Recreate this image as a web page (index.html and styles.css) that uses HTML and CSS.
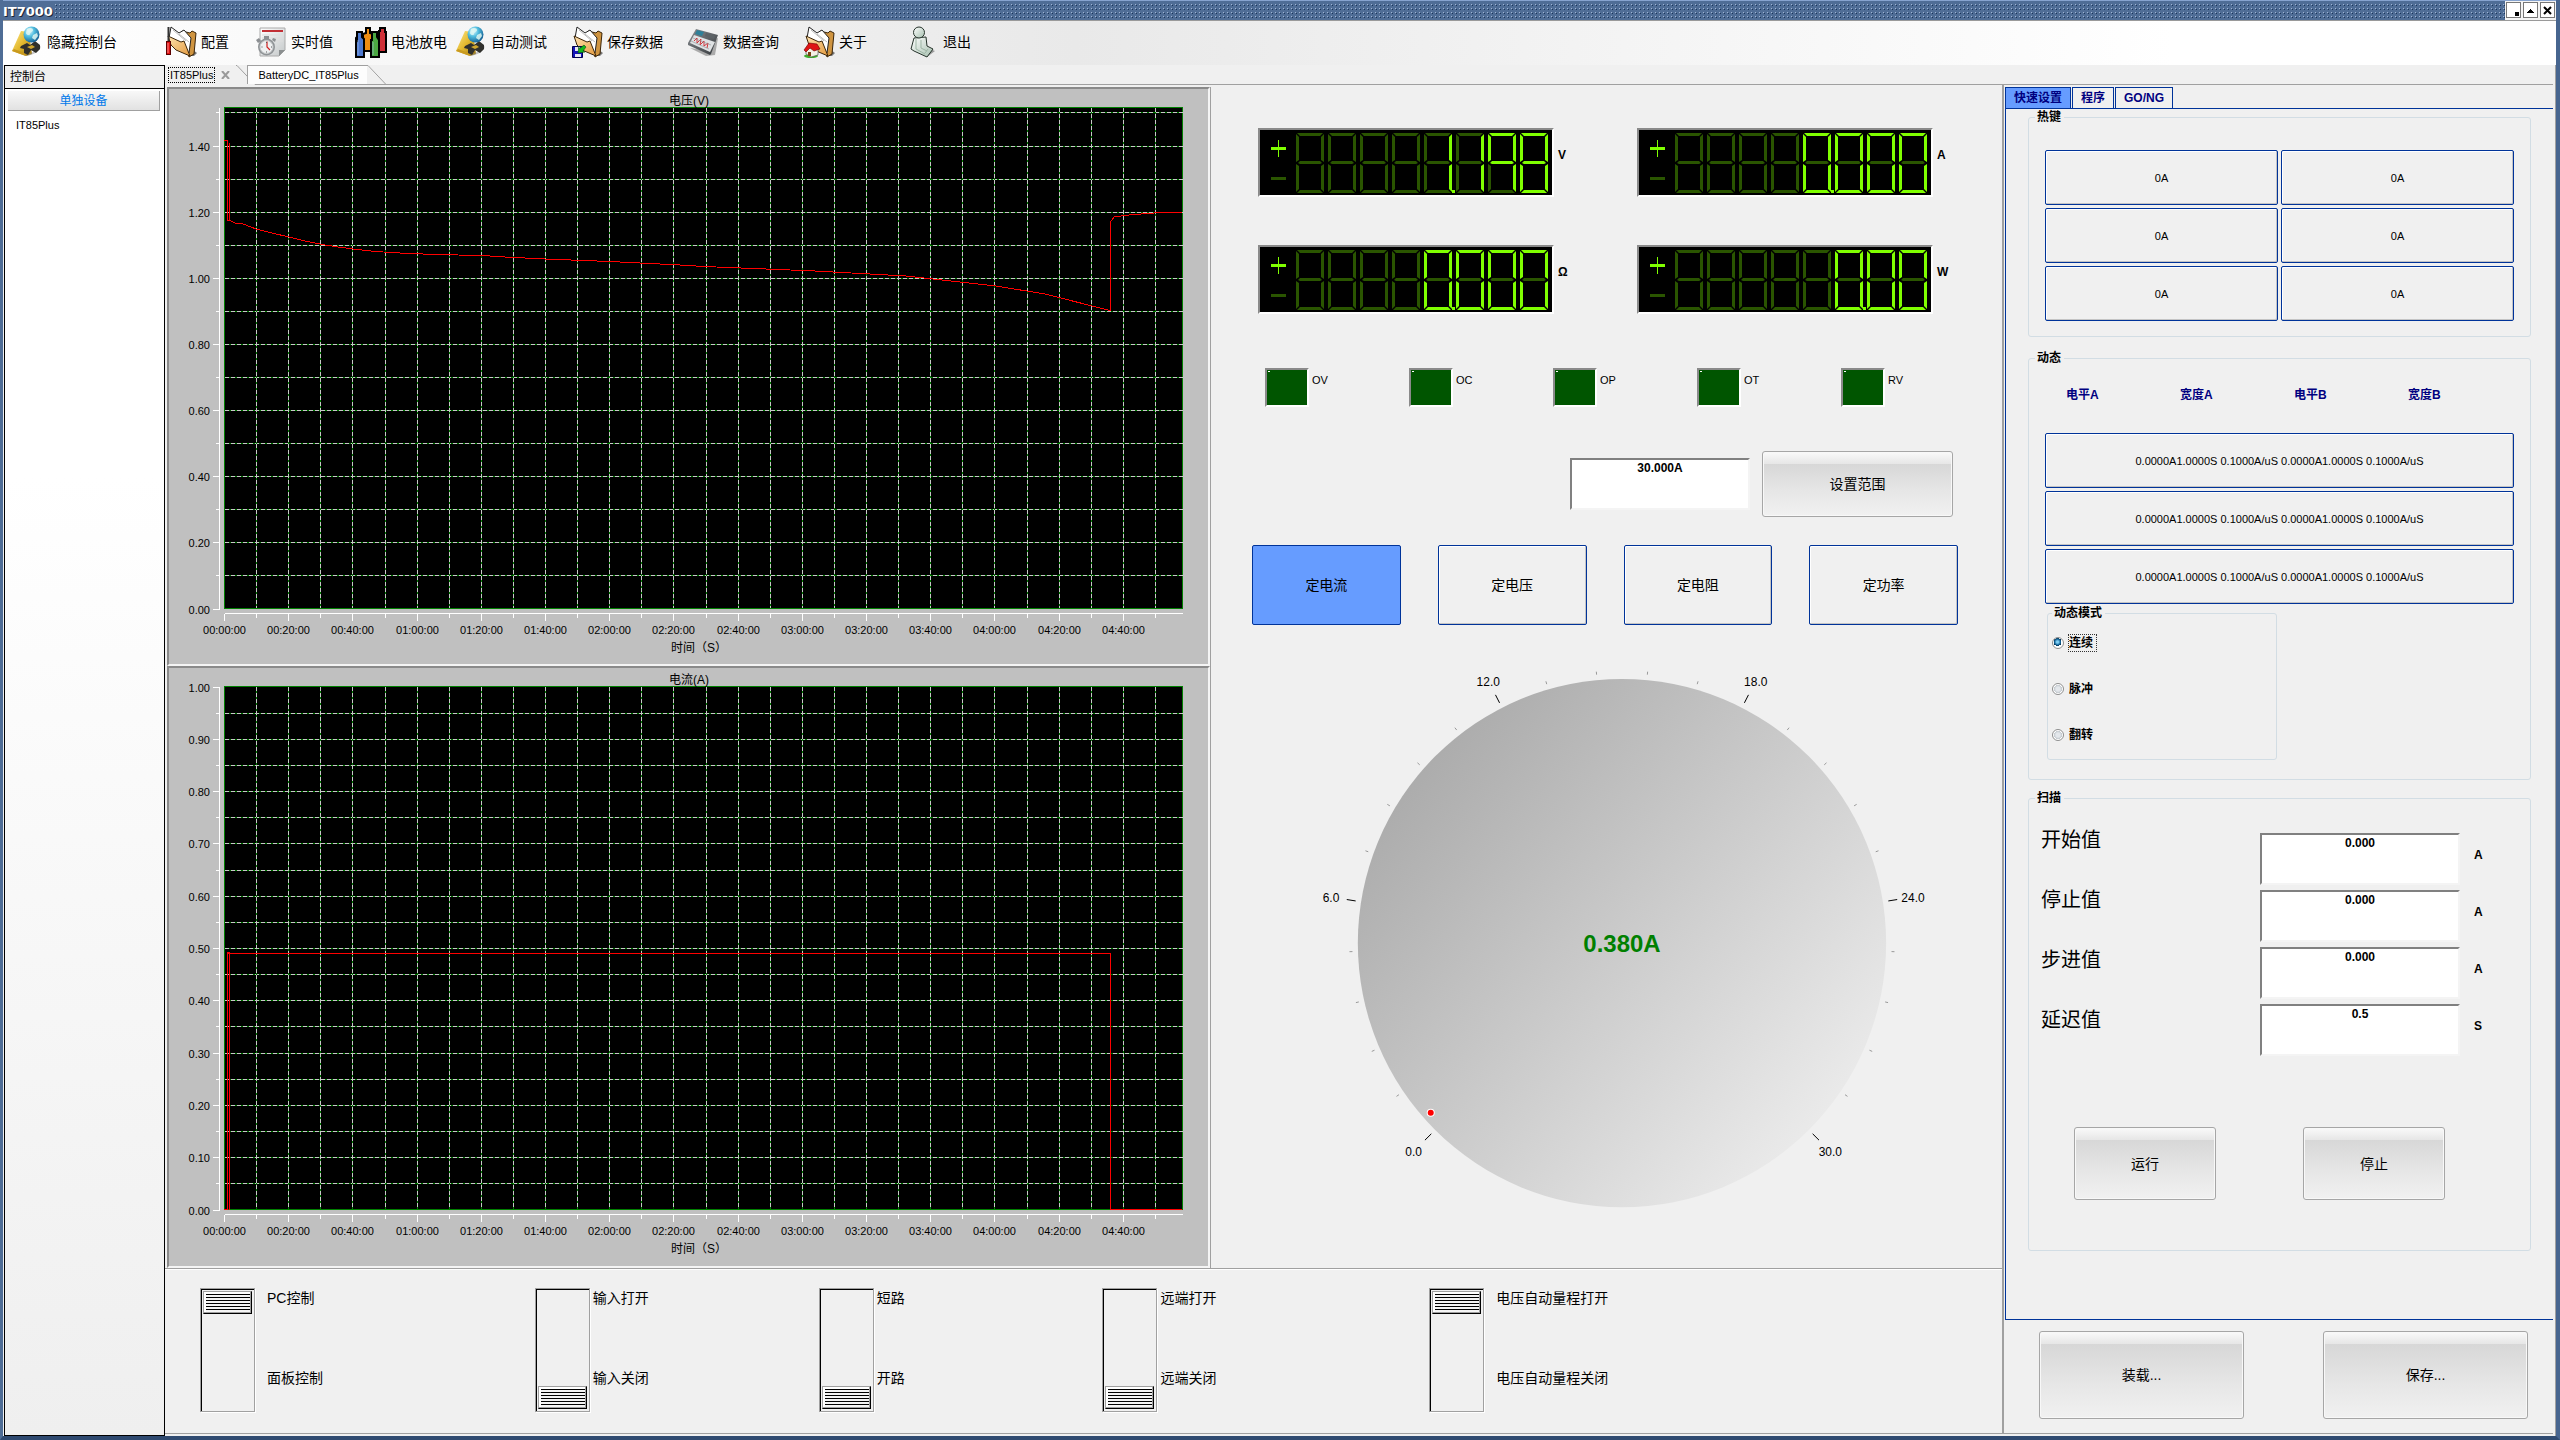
FILE: index.html
```html
<!DOCTYPE html>
<html lang="zh-CN">
<head>
<meta charset="utf-8">
<title>IT7000</title>
<link rel="stylesheet" href="styles.css">
</head>
<body>
<svg class="defs" aria-hidden="true">
  <defs>
    <linearGradient id="g-yellow" x1="0" y1="0" x2="1" y2="1"><stop offset="0" stop-color="#ffe98a"/><stop offset=".5" stop-color="#e3b92f"/><stop offset="1" stop-color="#9a7410"/></linearGradient>
    <radialGradient id="g-globe" cx=".35" cy=".3" r=".8"><stop offset="0" stop-color="#e8fbff"/><stop offset=".4" stop-color="#53bfe0"/><stop offset="1" stop-color="#0a4f86"/></radialGradient>
    <linearGradient id="g-folder" x1="0" y1="0" x2="1" y2="1"><stop offset="0" stop-color="#ffe3ae"/><stop offset="1" stop-color="#e39a3f"/></linearGradient>
    <linearGradient id="g-steel" x1="0" y1="0" x2="1" y2="1"><stop offset="0" stop-color="#8b8f93"/><stop offset="1" stop-color="#33373b"/></linearGradient>
    <linearGradient id="g-paper" x1="0" y1="0" x2="1" y2="1"><stop offset="0" stop-color="#ffffff"/><stop offset="1" stop-color="#c4c8c9"/></linearGradient>
    <linearGradient id="g-jade" x1="0" y1="0" x2="1" y2="1"><stop offset="0" stop-color="#ffffff"/><stop offset="1" stop-color="#a5bfae"/></linearGradient>
    <linearGradient id="g-dial" x1="0" y1="0.08" x2="0.95" y2="0.9"><stop offset="0" stop-color="#a3a3a3"/><stop offset="1" stop-color="#f0f0f0"/></linearGradient>
    <symbol id="i-console" viewBox="0 0 32 32">
      <path d="M1 25 10 5l8 1 3 22-6 2z" fill="url(#g-yellow)"/>
      <path d="M1 25 15 30l-1-3L3 23z" fill="#c99a1f"/>
      <path d="M14 30c5 0 12-3 15-7l1-3-8 6z" fill="#8c8c8c" opacity=".5"/>
      <path d="M10 20l6-3 3 2 5-4 5 4v4l-4 4-5-3-3 5-4-2v-4l-4-1z" fill="#30302c"/>
      <path d="M16 21l5-2 3 2-4 2z" fill="#cfa62d"/>
      <circle cx="20.500" cy="8.500" r="8" fill="url(#g-globe)"/>
      <path d="M16 3c3-2 6-1 6 1s-3 2-3 4-4 1-4-1zM22 9l4-2 1 3-3 4-3-2z" fill="#dff7f2" opacity=".85"/>
    </symbol>
    <symbol id="i-folder" viewBox="0 0 32 32">
      <path d="M24 30h5l3-3-4-3z" fill="#777"/>
      <path d="M17 5l8 2 2-2 4 2-2 21-5 3z" fill="#cf9440" stroke="#3b2509"/>
      <path d="M6 1l8 6 5-3 7 8-2 15-12-6-8-9z" fill="#fff" stroke="#222"/>
      <path d="M8 4l13 11M14 8l10 8" stroke="#bbb" fill="none"/>
      <path d="M3 10l13 6 3-1 6 15-14-6-5-5z" fill="url(#g-folder)" stroke="#3b2509"/>
    </symbol>
    <symbol id="i-config" viewBox="0 0 32 32">
      <use href="#i-folder"/>
      <path d="M3.500 1v14" stroke="#333" stroke-width="2"/>
      <rect x="1.500" y="15.500" width="4" height="13" fill="#e01010" stroke="#5a0000"/>
      <path d="M3 17v10" stroke="#ff8a8a"/>
    </symbol>
    <symbol id="i-save" viewBox="0 0 32 32">
      <use href="#i-folder"/>
      <path d="M1.500 20.500h10v11h-10z" fill="#1414b8" stroke="#00004a"/>
      <path d="M4 21h5v4H4zM4 28h6v3H4z" fill="#e6e6f2"/>
      <path d="M13 19l-5 4v-3l-1 7 7-1-2-1 3-4z" fill="#12b81c" stroke="#064d0a" stroke-width=".6"/>
    </symbol>
    <symbol id="i-about" viewBox="0 0 32 32">
      <use href="#i-folder"/>
      <ellipse cx="8" cy="30" rx="7" ry="2" fill="#3fae2c"/>
      <path d="M3 24l4-4 8 2v7l-7 2-5-3z" fill="#f3efe4" stroke="#444" stroke-width=".6"/>
      <path d="M1 24l5-7 8 1 3 5-6 2-4-3-4 4z" fill="#df1414" stroke="#6a0000" stroke-width=".6"/>
      <rect x="5" y="26" width="3" height="4" fill="#7a4312"/>
    </symbol>
    <symbol id="i-clock" viewBox="0 0 32 32">
      <path d="M5 2h25v22l-6 6H5z" fill="url(#g-paper)" stroke="#aaa"/>
      <path d="M7 4h21v2H7z" fill="#c22f35"/>
      <path d="M7 9h21M7 12h21M7 15h21" stroke="#ddd"/>
      <path d="M24 30v-6h6z" fill="#8b8f90"/>
      <path d="M9 10h5v3H9zM1 14l3-2 2 3-3 2zM18 12l3 1-1 3-3-2z" fill="#8c8f92"/>
      <circle cx="11.500" cy="21" r="8.500" fill="#8f9396"/>
      <circle cx="11.500" cy="21" r="6.500" fill="#eef0f1" stroke="#c9cccd"/>
      <path d="M12 15.500v5.500l3 3" stroke="#d02020" fill="none" stroke-width="1.200"/>
      <path d="M11.500 16v1M11.500 25.500v1M6.500 21h1M16 21h1" stroke="#555"/>
    </symbol>
    <symbol id="i-battery" viewBox="0 0 32 32">
      <g stroke="#000" stroke-width="2">
        <path d="M24 5h1V2h5v4h1v20h-7z" fill="#cf3038"/>
        <path d="M8 8l3-1V2h4v5l3 1v17H8z" fill="#ef8d12"/>
        <path d="M2 14V6h5v5l2 2v18H1V13z" fill="#4c78cf"/>
        <path d="M17 14V6h5v5l2 3v17h-8V14z" fill="#4ba842"/>
      </g>
      <path d="M3 14v15M18 16v13" stroke="#a9c6f0" opacity=".6"/>
    </symbol>
    <symbol id="i-meter" viewBox="0 0 32 32">
      <path d="M3 22l16 8 9-1 3-17-3 1-5 12z" fill="#666" opacity=".5"/>
      <path d="M9 3l22 6-7 19-1 1L1 19v-2z" fill="url(#g-steel)"/>
      <path d="M7 9l21 7-5 10L3 17z" fill="#dfe2e4"/>
      <path d="M10 4l7 2-2 4-7-2z" fill="#2f8099"/>
      <path d="M19 7l9 3-1 3-9-3z" fill="#5c6266"/>
      <path d="M7 15l3-3 0 5 4-4-1 6 4-4v5l4-3-1 5" stroke="#d2353c" fill="none"/>
      <path d="M6 12l18 7M4 15l18 8" stroke="#8d9295" stroke-width=".6"/>
    </symbol>
    <symbol id="i-exit" viewBox="0 0 32 32">
      <path d="M20 31l8-6-5-2z" fill="#777" opacity=".7"/>
      <path d="M7 12l12-1 1 9 6 3-6 8-13-6-3-2z" fill="url(#g-jade)" stroke="#26332b"/>
      <path d="M9 13v10l9 5M14 14v8l6 3M18 27l3-4" stroke="#9db5a5" fill="none"/>
      <circle cx="12" cy="6.500" r="5.500" fill="url(#g-jade)" stroke="#26332b"/>
    </symbol>
  </defs>
</svg>

<div class="window">
  <header class="titlebar">
    <h1 class="titlebar__name">IT7000</h1>
    <div class="titlebar__grip"></div>
    <div class="titlebar__buttons">
      <button type="button" class="winbtn" aria-label="最小化"><svg viewBox="0 0 13 13"><path d="M8 8h4v4H8z"/></svg></button>
      <button type="button" class="winbtn" aria-label="还原"><svg viewBox="0 0 13 13"><path d="M6 5h1v1h1v1h1v1h1v1H3V8h1V7h1V6h1z"/></svg></button>
      <button type="button" class="winbtn" aria-label="关闭"><svg viewBox="0 0 13 13"><path d="M3 3l7 7M10 3l-7 7" stroke="#000" stroke-width="2"/></svg></button>
    </div>
  </header>

  <nav class="toolbar">
    <button type="button" class="tool"><svg><use href="#i-console"/></svg>隐藏控制台</button>
    <button type="button" class="tool"><svg><use href="#i-config"/></svg>配置</button>
    <button type="button" class="tool"><svg><use href="#i-clock"/></svg>实时值</button>
    <button type="button" class="tool"><svg><use href="#i-battery"/></svg>电池放电</button>
    <button type="button" class="tool"><svg><use href="#i-console"/></svg>自动测试</button>
    <button type="button" class="tool"><svg><use href="#i-save"/></svg>保存数据</button>
    <button type="button" class="tool"><svg><use href="#i-meter"/></svg>数据查询</button>
    <button type="button" class="tool"><svg><use href="#i-about"/></svg>关于</button>
    <button type="button" class="tool"><svg><use href="#i-exit"/></svg>退出</button>
  </nav>

  <div class="workspace">
    <aside class="sidebar">
      <h2 class="sidebar__title">控制台</h2>
      <button type="button" class="sidebar__group">单独设备</button>
      <ul class="sidebar__list"><li>IT85Plus</li></ul>
    </aside>

    <div class="document">
      <div class="doctabs">
        <div class="doctab doctab--active">
          <button type="button" class="doctab__label doctab__label--focus">IT85Plus</button>
          <button type="button" class="doctab__close" aria-label="关闭标签"><svg viewBox="0 0 9 8"><path d="M1 0l7 8M8 0L1 8" stroke="#9a9a9a" stroke-width="2"/></svg></button>
          <svg class="doctab__edge" viewBox="0 0 19 20"><path d="M0 .5h1l18 19"/></svg>
        </div>
        <div class="doctab doctab--back">
          <button type="button" class="doctab__label">BatteryDC_IT85Plus</button>
          <svg class="doctab__edge" viewBox="0 0 19 20"><path d="M0 .5h1l18 19" /></svg>
        </div>
      </div>

      <div class="panes">
        <div class="left">
          <div class="upper">
            <div class="charts">
              <figure class="chart"><svg id="chart-voltage" viewBox="0 0 1039 575" role="img" aria-label="电压(V)"></svg></figure>
              <figure class="chart"><svg id="chart-current" viewBox="0 0 1039 598" role="img" aria-label="电流(A)"></svg></figure>
            </div>

            <section class="meter">
              <div class="readouts">
                <div class="readout"><svg class="lcd" data-value="1.198" viewBox="0 0 292 65"></svg><span class="readout__unit">V</span></div>
                <div class="readout"><svg class="lcd" data-value="0.000" viewBox="0 0 292 65"></svg><span class="readout__unit">A</span></div>
                <div class="readout"><svg class="lcd" data-value="0.000" viewBox="0 0 292 65"></svg><span class="readout__unit">Ω</span></div>
                <div class="readout"><svg class="lcd" data-value="0.00" viewBox="0 0 292 65"></svg><span class="readout__unit">W</span></div>
              </div>
              <div class="leds">
                <div class="led"><i class="led__lamp"></i><span>OV</span></div>
                <div class="led"><i class="led__lamp"></i><span>OC</span></div>
                <div class="led"><i class="led__lamp"></i><span>OP</span></div>
                <div class="led"><i class="led__lamp"></i><span>OT</span></div>
                <div class="led"><i class="led__lamp"></i><span>RV</span></div>
              </div>
              <div class="range">
                <input class="field range__field" type="text" value="30.000A" aria-label="范围">
                <button type="button" class="gloss range__button">设置范围</button>
              </div>
              <div class="modes">
                <button type="button" class="flat flat--on" aria-pressed="true">定电流</button>
                <button type="button" class="flat">定电压</button>
                <button type="button" class="flat">定电阻</button>
                <button type="button" class="flat">定功率</button>
              </div>
              <svg class="dial" id="dial" viewBox="0 0 792 612"></svg>
            </section>
          </div>

          <section class="switches">
            <div class="switch switch--wide">
              <input class="slide" id="sw-pc" type="range" min="0" max="1" value="1">
              <div class="switch__text"><label for="sw-pc">PC控制</label><label for="sw-pc">面板控制</label></div>
            </div>
            <div class="switch">
              <input class="slide" id="sw-in" type="range" min="0" max="1" value="0">
              <div class="switch__text"><label for="sw-in">输入打开</label><label for="sw-in">输入关闭</label></div>
            </div>
            <div class="switch">
              <input class="slide" id="sw-short" type="range" min="0" max="1" value="0">
              <div class="switch__text"><label for="sw-short">短路</label><label for="sw-short">开路</label></div>
            </div>
            <div class="switch">
              <input class="slide" id="sw-remote" type="range" min="0" max="1" value="0">
              <div class="switch__text"><label for="sw-remote">远端打开</label><label for="sw-remote">远端关闭</label></div>
            </div>
            <div class="switch switch--wide">
              <input class="slide" id="sw-auto" type="range" min="0" max="1" value="1">
              <div class="switch__text"><label for="sw-auto">电压自动量程打开</label><label for="sw-auto">电压自动量程关闭</label></div>
            </div>
          </section>
        </div>

        <section class="setup">
          <div class="setup__tabs">
            <button type="button" class="setuptab setuptab--on">快速设置</button>
            <button type="button" class="setuptab">程序</button>
            <button type="button" class="setuptab">GO/NG</button>
          </div>
          <div class="setup__body">
            <fieldset class="group">
              <legend>热键</legend>
              <div class="hotkeys">
                <button type="button" class="flat flat--small">0A</button>
                <button type="button" class="flat flat--small">0A</button>
                <button type="button" class="flat flat--small">0A</button>
                <button type="button" class="flat flat--small">0A</button>
                <button type="button" class="flat flat--small">0A</button>
                <button type="button" class="flat flat--small">0A</button>
              </div>
            </fieldset>

            <fieldset class="group group--dynamic">
              <legend>动态</legend>
              <div class="levels"><span>电平A</span><span>宽度A</span><span>电平B</span><span>宽度B</span></div>
              <div class="presets">
                <button type="button" class="flat flat--small">0.0000A1.0000S 0.1000A/uS 0.0000A1.0000S 0.1000A/uS</button>
                <button type="button" class="flat flat--small">0.0000A1.0000S 0.1000A/uS 0.0000A1.0000S 0.1000A/uS</button>
                <button type="button" class="flat flat--small">0.0000A1.0000S 0.1000A/uS 0.0000A1.0000S 0.1000A/uS</button>
              </div>
              <fieldset class="group group--mode">
                <legend>动态模式</legend>
                <label class="radio"><input type="radio" name="mode" checked><span class="radio__text radio__text--focus">连续</span></label>
                <label class="radio"><input type="radio" name="mode"><span class="radio__text">脉冲</span></label>
                <label class="radio"><input type="radio" name="mode"><span class="radio__text">翻转</span></label>
              </fieldset>
            </fieldset>

            <fieldset class="group group--scan">
              <legend>扫描</legend>
              <div class="scan">
                <div class="scan__labels">
                  <label for="scan-start">开始值</label>
                  <label for="scan-stop">停止值</label>
                  <label for="scan-step">步进值</label>
                  <label for="scan-delay">延迟值</label>
                </div>
                <div class="scan__fields">
                  <input class="field" id="scan-start" type="text" value="0.000">
                  <input class="field" id="scan-stop" type="text" value="0.000">
                  <input class="field" id="scan-step" type="text" value="0.000">
                  <input class="field" id="scan-delay" type="text" value="0.5">
                </div>
                <div class="scan__units"><span>A</span><span>A</span><span>A</span><span>S</span></div>
              </div>
              <div class="scan__actions">
                <button type="button" class="gloss">运行</button>
                <button type="button" class="gloss">停止</button>
              </div>
            </fieldset>
          </div>
          <div class="setup__foot">
            <button type="button" class="gloss">装载...</button>
            <button type="button" class="gloss">保存...</button>
          </div>
        </section>
      </div>
    </div>
  </div>
</div>
<script src="app.js"></script>
</body>
</html>
```

FILE: styles.css
```css
* { box-sizing: border-box; }

body {
  margin: 0;
  font: 12px/16px "Liberation Sans", "Noto Sans CJK SC", sans-serif;
  color: #000;
  background: #4f6d96;
}

button, input {
  font: inherit;
  color: inherit;
  margin: 0;
}

button { padding: 0; border: 0; background: none; }

.defs { position: absolute; width: 0; height: 0; }

.window {
  display: flex;
  flex-direction: column;
  min-height: 100vh;
  border: solid #4f6d96;
  border-width: 0 4px 4px 3px;
  border-right-color: #47658f;
  border-bottom-color: #2f4a70;
  background: #f0f0f0;
}

/* title bar */
.titlebar {
  display: flex;
  height: 21px;
  border-top: 1px solid #86a3cf;
  border-bottom: 1px solid #9a9a9a;
  background: #4f6d96;
}
.titlebar__name {
  margin: 0;
  padding-right: 2px;
  font: bold 13px/21px "DejaVu Sans", sans-serif;
  color: #fff;
  text-shadow: 1px 1px 0 #1c2433;
}
.titlebar__grip {
  flex: 1;
  margin: 3px 0 1px;
  background:
    conic-gradient(at 1px 1px, transparent 75%, #9fb4d3 0) 0 0 / 4px 4px,
    conic-gradient(at 1px 1px, transparent 75%, #1b3559 0) 1px 1px / 4px 4px;
}
.titlebar__buttons {
  display: flex;
  gap: 2px;
  padding: 1px;
  background: #f4f4f4;
}
.winbtn {
  width: 15px;
  height: 16px;
  border: 1px solid #777;
  background: #fff;
}
.winbtn svg { display: block; width: 13px; height: 13px; }

/* toolbar */
.toolbar {
  display: grid;
  grid-template-columns: 154px 90px 100px 100px 116px 116px 116px 104px auto;
  justify-content: start;
  height: 44px;
  padding: 0 0 3px 8px;
  background: linear-gradient(90deg, #fff, #e9e9e9 42%, #fff 85%);
}
.tool {
  display: flex;
  align-items: center;
  gap: 4px;
  font-size: 14px;
  white-space: nowrap;
}
.tool svg { width: 32px; height: 32px; }

/* left console */
.workspace { display: flex; flex: 1; }
.sidebar {
  flex: 0 0 161px;
  margin-left: 1px;
  border: 1px solid #000;
  background: linear-gradient(#fff, #fff 30%, #efefef);
}
.sidebar__title {
  margin: 0 0 2px;
  padding: 0 5px;
  border-bottom: 1px solid #000;
  font-size: 12px;
  font-weight: normal;
  line-height: 22px;
  background: #f0f0f0;
}
.sidebar__group {
  display: block;
  width: calc(100% - 7px);
  margin: 0 3px;
  height: 20px;
  border: solid #a0a0a0;
  border-width: 0 1px 1px 0;
  color: #0078ea;
  background: linear-gradient(#f8f8f8, #e2e2e2);
}
.sidebar__list {
  margin: 6px 0 0;
  padding: 0 11px;
  list-style: none;
  font-size: 11px;
}

/* document tabs */
.document {
  flex: 1;
  display: flex;
  flex-direction: column;
  min-width: 0;
  padding-right: 2px;
  border-right: 1px solid #a0a0a0;
}
.doctabs {
  display: flex;
  height: 20px;
  border-bottom: 1px solid #a0a0a0;
  font-size: 11px;
}
.doctab { display: flex; align-items: center; height: 20px; }
.doctab--active { padding-left: 3px; gap: 6px; background: #f0f0f0; }
.doctab--back { position: relative; margin-left: -8px; height: 19px; border-left: 1px solid #a0a0a0; }
.doctab--back .doctab__label { padding: 0 8px 0 10px; align-self: stretch; background: #fdfdfd; border-top: 1px solid #a0a0a0; }
.doctab__label--focus { line-height: 14px; padding: 0 1px; border: 1px dotted #000; }
.doctab__close svg { display: block; width: 9px; height: 8px; }
.doctab__edge { width: 19px; height: 20px; fill: #fdfdfd; stroke: #a0a0a0; }
.doctab--active .doctab__edge { fill: none; }

/* main split */
.panes { flex: 1; display: flex; background: #f0f0f0; border-bottom: 1px solid #a0a0a0; margin-bottom: 2px; }
.left { flex: 1; display: flex; flex-direction: column; min-width: 0; border-right: 2px solid #a0a0a0; }
.upper {
  display: grid;
  grid-template-columns: 1043fr 792fr;
  padding: 2px 0 0 2px;
  border-bottom: 1px solid #a0a0a0;
}
.charts { background: #fff; }
.chart {
  margin: 0;
  border: 2px solid;
  border-color: #8a8a8a #f4f4f4 #f4f4f4 #8a8a8a;
  background: #c0c0c0;
}
.chart svg { display: block; width: 100%; height: auto; }
.chart text { font-size: 11px; }
.chart .caption { font-size: 12px; }

.meter { border-left: 1px solid #a0a0a0; display: flex; flex-direction: column; }
.readouts {
  display: grid;
  grid-template-columns: 379px 1fr;
  gap: 48px 0;
  padding: 41px 0 0 47px;
}
.readout { display: flex; gap: 4px; }
.lcd {
  flex: none;
  width: 296px;
  height: 69px;
  border: 2px solid;
  border-color: #8a8a8a #fff #fff #8a8a8a;
  background: #000;
}
.readout__unit { font-weight: bold; padding-top: 19px; }

.leds { display: flex; padding: 54px 0 0 54px; }
.led { display: flex; gap: 3px; width: 144px; font-size: 11px; padding-right: 4px; }
.led__lamp {
  width: 44px;
  height: 39px;
  border: 2px solid;
  border-color: #8a8a8a #fff #fff #8a8a8a;
  background: linear-gradient(#fff, #fff) 1px 1px / 2px 1px no-repeat #005500;
}
.led span { padding-top: 4px; }

.field {
  display: block;
  height: 52px;
  padding: 0 0 32px;
  border: 2px solid;
  border-color: #808080 #f4f4f4 #f4f4f4 #808080;
  background: #fff;
  font-weight: bold;
  text-align: center;
}
.gloss {
  border: 1px solid #a6a6a6;
  border-radius: 3px;
  box-shadow: inset 0 0 0 1px #f8f8f8;
  background: linear-gradient(#fafafa, #e6e6e6 12px, #d7d7d7 12px, #e6e6e6 60%, #f1f1f1);
  font-size: 14px;
}
.flat {
  border: 1px solid #003399;
  border-radius: 2px;
  box-shadow: inset -1px -1px 0 #c4c4c4, inset 1px 1px 0 #fff;
  font-size: 14px;
}
.flat--on { background: #669cff; box-shadow: none; }
.flat--small { height: 55px; font-size: 11px; }

.range { display: flex; justify-content: flex-end; align-items: center; gap: 12px; padding: 44px 49px 0 0; }
.range__field { width: 180px; }
.range__button { width: 191px; height: 66px; }
.modes { display: grid; grid-template-columns: repeat(4, 1fr); gap: 37px; padding: 28px 44px 0 41px; }
.modes .flat { height: 80px; }
.dial { display: block; width: 100%; height: auto; margin-top: 24px; }
.dial text { font-size: 12px; text-anchor: middle; }
.dial .dial__value { font-size: 24px; font-weight: bold; fill: #008000; }

/* lower switches */
.switches {
  flex: 1;
  display: grid;
  grid-template-columns: 335fr 284fr 284fr 327fr 573fr;
  padding: 18px 0 20px 35px;
  border-top: 1px solid #fff;
}
.switch { display: flex; gap: 3px; font-size: 14px; }
.switch--wide { gap: 12px; }
.switch__text { display: flex; flex-direction: column; gap: 60px; line-height: 20px; }
.slide {
  appearance: none;
  writing-mode: vertical-lr;
  direction: rtl;
  width: 55px;
  height: 124px;
  padding: 2px;
  border: 1px solid;
  border-color: #a0a0a0;
  box-shadow: inset 1px 1px 0 #000, 1px 1px 0 #fff;
  background: #f0f0f0;
}
.slide::-webkit-slider-thumb {
  appearance: none;
  width: 49px;
  height: 23px;
  border: 1px solid;
  border-color: #a0a0a0 #000 #000 #a0a0a0;
  box-shadow: inset -1px -1px 0 #a0a0a0, inset 2px 2px 0 #fff;
  background: repeating-linear-gradient(#f4f4f4 0 2px, #000 2px 3px);
}

/* right set-up column */
.setup { flex: 0 0 549px; display: flex; flex-direction: column; padding: 2px 0 0 1px; }
.setup__tabs { display: flex; gap: 1px; }
.setuptab {
  height: 21px;
  padding: 0 8px;
  border: solid #003399;
  border-width: 1px 1px 0;
  font-weight: bold;
  color: #000080;
}
.setuptab--on { background: #669cff; }
.setup__body {
  flex: 1;
  padding: 0 22px;
  border: solid #003399;
  border-width: 1px 0 1px 1px;
}
.group {
  min-width: 0;
  margin: 0;
  padding: 25px 16px 15px;
  border: 1px solid #d2dde4;
  border-radius: 3px;
}
.group legend { margin-left: -10px; padding: 0 3px 0 2px; font-weight: bold; }
.hotkeys { display: grid; grid-template-columns: 1fr 1fr; gap: 3px; }
.group--dynamic { margin-top: 13px; padding: 21px 16px 19px; }
.levels {
  display: grid;
  grid-template-columns: 114px 114px 114px 1fr;
  padding-left: 21px;
  font-weight: bold;
  color: #000080;
}
.presets { display: grid; gap: 3px; margin-top: 30px; }
.group--mode { width: 230px; margin: 1px 0 0 2px; padding: 13px 4px 15px; display: grid; gap: 28px; }
.group--mode legend { margin-left: 0; }
.radio { display: flex; align-items: center; gap: 4px; height: 18px; font-weight: bold; }
.radio input {
  appearance: none;
  width: 12px;
  height: 12px;
  border: 1px solid #8e8f8f;
  border-radius: 50%;
  background: radial-gradient(circle, #e4e8ec 0 2px, #c3c9ce 4px, #fff 4px);
}
.radio input:checked { background: radial-gradient(circle at 45% 40%, #7fd0f5 0 1px, #0d5f94 3px, #06304f 4px, #fff 4px); }
.radio__text { padding: 0 3px 0 0; border: 1px solid transparent; }
.radio__text--focus { border: 1px dotted #333; }

.group--scan { margin-top: 10px; padding: 22px 0 50px 12px; }
.group--scan legend { margin-left: -6px; }
.scan { display: grid; grid-template-columns: 1fr 200px 56px; column-gap: 14px; }
.scan__labels { display: flex; flex-direction: column; gap: 36px; font-size: 20px; line-height: 24px; }
.scan__fields { display: grid; gap: 5px; padding-top: 5px; }
.scan__fields .field { width: 100%; }
.scan__units { display: flex; flex-direction: column; gap: 41px; padding-top: 19px; font-weight: bold; }
.scan__actions { display: flex; gap: 87px; margin-top: 71px; padding-left: 33px; }
.scan__actions .gloss { width: 142px; height: 73px; }

.setup__foot { display: flex; gap: 79px; padding: 11px 0 14px 34px; }
.setup__foot .gloss { width: 205px; height: 88px; }
```

FILE: app.js
```js
const NS = "http://www.w3.org/2000/svg";

function add(parent, name, attrs, text) {
  const node = document.createElementNS(NS, name);
  for (const key in attrs) node.setAttribute(key, attrs[key]);
  if (text !== undefined) node.textContent = text;
  parent.appendChild(node);
  return node;
}

function line(parent, x1, y1, x2, y2, stroke, extra) {
  return add(parent, "line", Object.assign({ x1, y1, x2, y2, stroke, "shape-rendering": "crispEdges" }, extra));
}

function clock(minutes) {
  const two = n => String(n).padStart(2, "0");
  return two(Math.floor(minutes / 60)) + ":" + two(minutes % 60) + ":00";
}

/* One plot: grid, both axes and the measured trace. */
function drawChart(id, o) {
  const svg = document.getElementById(id);
  const left = 55.5, right = 1013.5, step = 32.1;
  add(svg, "rect", { x: left, y: o.top, width: right - left, height: o.bottom - o.top, fill: "#000", stroke: "#008000", "shape-rendering": "crispEdges" });

  line(svg, 50.5, o.top, 50.5, o.bottom + 1, "#fff");
  for (let i = 0; i <= o.rows; i++) {
    const y = Math.round(o.bottom - i * o.rowStep) + 0.5;
    const major = i % 2 === 0;
    line(svg, major ? 44 : 47, y, 50, y, "#fff");
    if (i > 0 && y > o.top + 2) {
      line(svg, left, y, right, y, "#008000");
      line(svg, left, y, right, y, "#c8c8c8", { "stroke-dasharray": "4 2" });
    }
    if (major) add(svg, "text", { x: 41, y: y + 4, "text-anchor": "end" }, (i * o.rowValue).toFixed(2));
  }

  const axis = o.bottom + 5;
  line(svg, left, axis, right, axis, "#fff");
  for (let i = 0; i < 30; i++) {
    const x = Math.round(55 + i * step) + 0.5;
    const major = i % 2 === 0;
    line(svg, x, axis, x, axis + (major ? 7 : 4), "#fff");
    if (i > 0) {
      line(svg, x, o.top, x, o.bottom, "#008000");
      line(svg, x, o.top, x, o.bottom, "#c8c8c8", { "stroke-dasharray": "4 2" });
    }
    if (major) add(svg, "text", { x: x, y: axis + 20, "text-anchor": "middle" }, clock(i * 10));
  }
  line(svg, left, o.bottom, right, o.bottom, "#008000");

  o.traces.forEach(points => add(svg, "polyline", { points, fill: "none", stroke: "#f00", "shape-rendering": "crispEdges" }));
  add(svg, "text", { x: 520, y: o.top - 3, "text-anchor": "middle", class: "caption" }, o.title);
  add(svg, "text", { x: 530, y: axis + 38, "text-anchor": "middle", class: "caption" }, "时间（S）");
}

drawChart("chart-voltage", {
  title: "电压(V)", top: 18.5, bottom: 519.5, rows: 15, rowStep: 33.07, rowValue: 0.1,
  traces: ["55,51.5 58.5,51.5 58.5,131 60.500,131 60.500,54",
    "60,131 66,134 74,135 87,140 103,144 120,148 136,152 153,155.5 169,158 184,160 206,162.5 231,164 265,165.5 313,166.5 336,168 376,170 441,172.5 471,174 511,176 535,177.5 646,182 737,187 827,197 876,205 941,221.5 941.5,221.5 941.5,133 945,128 960,126 985,124 1013,123"]
});

drawChart("chart-current", {
  title: "电流(A)", top: 18.5, bottom: 541.5, rows: 20, rowStep: 26.15, rowValue: 0.05,
  traces: ["55,541.5 58.5,541.5 58.5,284.5 60.500,284.5 60.500,541.5", "58.5,285.5 941.5,285.5 941.5,541.5 1013,541.5"]
});

/* Seven-segment read-outs, eight positions each. */
const SHAPES = {
  a: "1,0 27,0 24,3 4,3", b: "28,1 28,29 25,27 25,4", c: "28,31 28,59 25,56 25,33",
  d: "1,60 27,60 24,57 4,57", e: "0,31 0,59 3,56 3,33", f: "0,1 0,29 3,27 3,4",
  g: "2,30 4,28 24,28 26,30 24,31 4,31"
};
const LIT = { 0: "abcdef", 1: "bc", 8: "abcdefg", 9: "abcfg" };

document.querySelectorAll(".lcd").forEach(svg => {
  const value = svg.dataset.value;
  const digits = value.replace(".", "").padStart(8, " ");
  svg.setAttribute("role", "img");
  svg.setAttribute("aria-label", value);
  add(svg, "rect", { x: 11, y: 17, width: 15, height: 3, fill: "#80ff00" });
  add(svg, "rect", { x: 18, y: 10, width: 1, height: 17, fill: "#80ff00" });
  add(svg, "rect", { x: 11, y: 47, width: 15, height: 3, fill: "#2a5500" });
  [...digits].forEach((digit, i) => {
    const g = add(svg, "g", { transform: `translate(${36 + i * 32} 3)` });
    for (const s in SHAPES) {
      add(g, "polygon", { points: SHAPES[s], fill: (LIT[digit] || "").includes(s) ? "#80ff00" : "#2a5500" });
    }
  });
  const place = 8 - (value.length - value.indexOf(".") - 1);
  add(svg, "rect", { x: 32 + place * 32, y: 60, width: 3, height: 3, fill: "#80ff00" });
});

/* Rotary knob: 270 degrees of travel, 0 to 30 A. */
(function () {
  const svg = document.getElementById("dial");
  const cx = 411.5, cy = 294.5;
  const at = (deg, r) => {
    const a = deg * Math.PI / 180;
    return [cx - r * Math.sin(a), cy + r * Math.cos(a)];
  };
  add(svg, "circle", { cx, cy, r: 264.5, fill: "url(#g-dial)" });
  for (let i = 0; i <= 25; i++) {
    const deg = 45 + i * 10.8;
    const major = i % 5 === 0;
    const [x1, y1] = at(deg, 270), [x2, y2] = at(deg, major ? 279 : 273);
    add(svg, "line", { x1, y1, x2, y2, stroke: major ? "#000" : "#999" });
    if (major) {
      const [x, y] = at(deg, 295);
      add(svg, "text", { x, y: y + 5 }, (i / 5 * 6).toFixed(1));
    }
  }
  const [px, py] = at(45 + 0.38 / 30 * 270, 256);
  add(svg, "circle", { cx: px, cy: py, r: 4, fill: "#fff" });
  add(svg, "circle", { cx: px, cy: py, r: 3, fill: "#f00" });
  add(svg, "text", { x: cx, y: cy + 9, class: "dial__value" }, "0.380A");
})();
```
